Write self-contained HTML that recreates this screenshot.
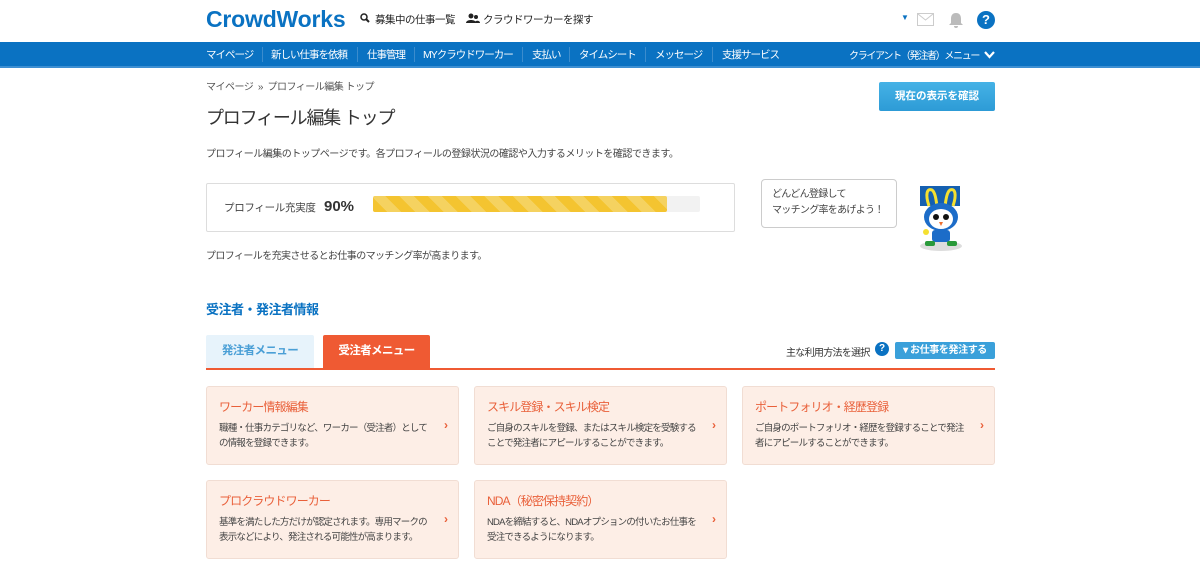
<!DOCTYPE html>
<html><head><meta charset="utf-8"><style>
*{margin:0;padding:0;box-sizing:border-box}
body{width:1200px;height:565px;overflow:hidden;background:#fff;font-family:"Liberation Sans","Noto Sans CJK JP",sans-serif;color:#333;position:relative}
.a{position:absolute;white-space:nowrap}
.nav{position:absolute;top:42px;left:0;width:1200px;height:26px;background:#0a72c2;border-bottom:2px solid #3d8fd2}
.nav span{position:absolute;top:5px;color:#fff;font-size:10.5px;letter-spacing:-1px}
.sep{position:absolute;top:5px;width:1px;height:15px;background:#3b8ccd}
.card{position:absolute;width:253px;background:#fdeee6;border:1px solid #f1ddd3;border-radius:3px}
.card h3{position:absolute;left:12px;top:11px;font-size:12px;font-weight:normal;color:#e9603a;letter-spacing:-0.9px;white-space:nowrap}
.card p{position:absolute;left:12px;top:34px;font-size:9.5px;line-height:15px;color:#444;white-space:normal;width:212px;letter-spacing:-0.8px}
.card i{position:absolute;right:10px;top:31px;color:#e9603a;font-style:normal;font-weight:bold;font-size:12px}
</style></head><body>
<div class="a" style="left:206px;top:6px;font-size:23px;font-weight:bold;color:#0a72c2;letter-spacing:-0.2px">CrowdWorks</div>
<svg class="a" style="left:360px;top:13px" width="10" height="10"><circle cx="4" cy="4" r="3" stroke="#222" stroke-width="1.5" fill="none"/><path d="M6 6L9 9" stroke="#222" stroke-width="2"/></svg>
<div class="a" style="left:375px;top:12px;font-size:10.5px;letter-spacing:-0.5px;color:#222">募集中の仕事一覧</div>
<svg class="a" style="left:466px;top:13px" width="14" height="10"><circle cx="5" cy="3" r="2.5" fill="#222"/><path d="M0 10C0 6 10 6 10 10Z" fill="#222"/><circle cx="10" cy="4" r="2" fill="#222"/><path d="M8 10C9 7 14 7 14 10Z" fill="#222"/></svg>
<div class="a" style="left:483px;top:12px;font-size:10.5px;letter-spacing:-0.5px;color:#222">クラウドワーカーを探す</div>
<div class="a" style="left:901px;top:13px;font-size:8px;color:#0a72c2">▼</div>
<div class="a" style="left:917px;top:13px;width:17px;height:13px;border:1px solid #ccc"><svg width="15" height="11" style="position:absolute;left:0;top:0"><path d="M0 0L7.5 6L15 0" stroke="#ccc" fill="none"/></svg></div>
<svg class="a" style="left:947px;top:11px" width="18" height="18"><path d="M9 2C5 2 4 5 4 8V12L2 14H16L14 12V8C14 5 13 2 9 2Z M7 15A2 2 0 0 0 11 15Z" fill="#bbb"/></svg>
<div class="a" style="left:977px;top:11px;width:18px;height:18px;border-radius:50%;background:#0a72c2;color:#fff;font-weight:bold;font-size:13px;text-align:center;line-height:18px">?</div>
<div class="nav">
<span style="left:206px">マイページ</span><div class="sep" style="left:262px"></div>
<span style="left:271px">新しい仕事を依頼</span><div class="sep" style="left:357px"></div>
<span style="left:367px">仕事管理</span><div class="sep" style="left:414px"></div>
<span style="left:423px">MYクラウドワーカー</span><div class="sep" style="left:522px"></div>
<span style="left:532px">支払い</span><div class="sep" style="left:569px"></div>
<span style="left:579px">タイムシート</span><div class="sep" style="left:645px"></div>
<span style="left:655px">メッセージ</span><div class="sep" style="left:712px"></div>
<span style="left:722px">支援サービス</span>
<span style="left:849px;font-size:10px;letter-spacing:-1.3px">クライアント（発注者）メニュー</span>
<svg style="position:absolute;left:984px;top:9px" width="11" height="8"><path d="M1 1L5.5 6L10 1" stroke="#fff" stroke-width="2.2" fill="none"/></svg>
</div>
<div class="a" style="left:206px;top:78px;font-size:10px;letter-spacing:-0.5px;color:#555">マイページ &nbsp;»&nbsp; プロフィール編集 トップ</div>
<div class="a" style="left:879px;top:82px;width:116px;height:29px;background:linear-gradient(#45b2e6,#2d9bd6);border-radius:2px;color:#fff;font-size:10.5px;font-weight:bold;text-align:center;line-height:29px">現在の表示を確認</div>
<div class="a" style="left:206px;top:104px;font-size:18px;letter-spacing:-1.2px;color:#333">プロフィール編集 トップ</div>
<div class="a" style="left:206px;top:145px;font-size:10px;letter-spacing:-0.5px;color:#444">プロフィール編集のトップページです。各プロフィールの登録状況の確認や入力するメリットを確認できます。</div>
<div class="a" style="left:206px;top:183px;width:529px;height:49px;border:1px solid #ddd;border-radius:2px"></div>
<div class="a" style="left:224px;top:200px;font-size:10.5px;letter-spacing:-0.3px;color:#444">プロフィール充実度</div>
<div class="a" style="left:324px;top:198px;font-size:15px;font-weight:bold;color:#333">90%</div>
<div class="a" style="left:373px;top:196px;width:327px;height:16px;background:#f2f2f2;border-radius:2px"></div>
<div class="a" style="left:373px;top:196px;width:294px;height:16px;background:repeating-linear-gradient(45deg,#f4c430 0 10px,#f5d260 10px 20px);border-radius:2px"></div>
<div class="a" style="left:761px;top:179px;width:136px;height:49px;border:1px solid #ccc;border-radius:4px;background:#fff;font-size:10px;letter-spacing:-0.7px;line-height:16px;padding:7px 10px;color:#444">どんどん登録して<br>マッチング率をあげよう！</div>
<svg class="a" style="left:915px;top:184px" width="52" height="68">
<ellipse cx="26" cy="62" rx="21" ry="5" fill="#ddd"/>
<rect x="5" y="2" width="40" height="20" fill="#1560b0"/>
<path d="M14 22C10 10 12 4 17 6C20 8 21 15 22 22M30 22C31 15 32 8 35 6C40 4 42 10 38 22" stroke="#f5e030" stroke-width="3" fill="none"/>
<ellipse cx="26" cy="33" rx="17" ry="14" fill="#1c6cc8"/>
<ellipse cx="26" cy="35" rx="12" ry="10" fill="#fff"/>
<circle cx="21" cy="33" r="3" fill="#111"/><circle cx="31" cy="33" r="3" fill="#111"/>
<path d="M24 38L28 38L26 42Z" fill="#f07030"/>
<rect x="17" y="46" width="18" height="12" rx="3" fill="#1c6cc8"/>
<rect x="10" y="57" width="10" height="5" rx="2" fill="#2a9a3a"/><rect x="32" y="57" width="10" height="5" rx="2" fill="#2a9a3a"/>
<circle cx="11" cy="48" r="3" fill="#f5e030"/>
</svg>
<div class="a" style="left:206px;top:247px;font-size:10px;letter-spacing:-0.6px;color:#444">プロフィールを充実させるとお仕事のマッチング率が高まります。</div>
<div class="a" style="left:206px;top:299px;font-size:13px;font-weight:bold;letter-spacing:-0.5px;color:#0a72c2">受注者・発注者情報</div>
<div class="a" style="left:206px;top:335px;width:108px;height:34px;background:#e7f3fb;border-radius:2px 2px 0 0;color:#4a9fd6;font-size:11.5px;letter-spacing:-0.6px;font-weight:bold;text-align:center;line-height:32px">発注者メニュー</div>
<div class="a" style="left:323px;top:335px;width:107px;height:34px;background:#ef5a33;border-radius:2px 2px 0 0;color:#fff;font-size:11.5px;letter-spacing:-0.6px;font-weight:bold;text-align:center;line-height:32px">受注者メニュー</div>
<div class="a" style="left:206px;top:368px;width:789px;height:2px;background:#ef5a33"></div>
<div class="a" style="left:786px;top:344px;font-size:10px;letter-spacing:-0.7px;color:#333">主な利用方法を選択</div>
<div class="a" style="left:875px;top:342px;width:14px;height:14px;border-radius:50%;background:#0a72c2;color:#fff;font-size:10px;font-weight:bold;text-align:center;line-height:14px">?</div>
<div class="a" style="left:895px;top:342px;width:100px;height:17px;background:#3aa0da;border-radius:2px;color:#fff;font-size:10px;letter-spacing:-0.4px;font-weight:bold;text-align:center;line-height:17px">▾ お仕事を発注する</div>
<div class="card" style="left:206px;top:386px;height:79px"><h3>ワーカー情報編集</h3><p>職種・仕事カテゴリなど、ワーカー（受注者）としての情報を登録できます。</p><i>›</i></div>
<div class="card" style="left:474px;top:386px;height:79px"><h3>スキル登録・スキル検定</h3><p>ご自身のスキルを登録、またはスキル検定を受験することで発注者にアピールすることができます。</p><i>›</i></div>
<div class="card" style="left:742px;top:386px;height:79px"><h3>ポートフォリオ・経歴登録</h3><p>ご自身のポートフォリオ・経歴を登録することで発注者にアピールすることができます。</p><i>›</i></div>
<div class="card" style="left:206px;top:480px;height:79px"><h3>プロクラウドワーカー</h3><p>基準を満たした方だけが認定されます。専用マークの表示などにより、発注される可能性が高まります。</p><i>›</i></div>
<div class="card" style="left:474px;top:480px;height:79px"><h3>NDA（秘密保持契約）</h3><p>NDAを締結すると、NDAオプションの付いたお仕事を受注できるようになります。</p><i>›</i></div>
</body></html>
